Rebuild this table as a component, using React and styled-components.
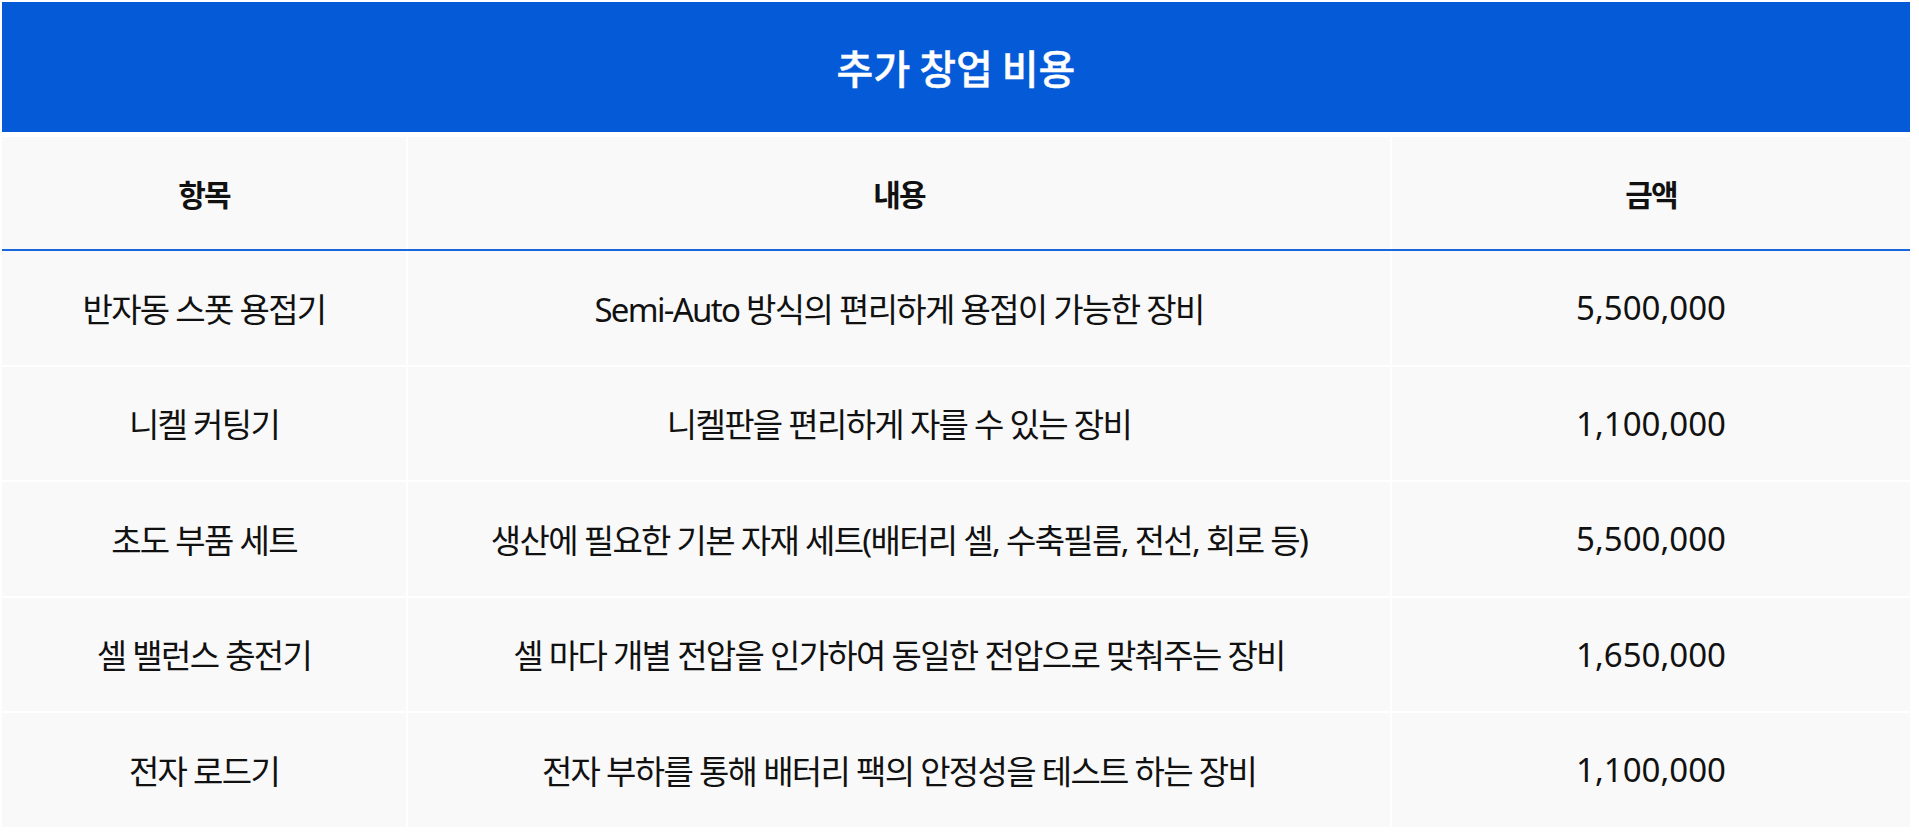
import styled, { createGlobalStyle } from "styled-components"

const GlobalStyle = createGlobalStyle`
  html, body {
    margin: 0;
    padding: 0;
    background: #ffffff;
  }
  body {
    font-family: "Noto Sans", "Noto Sans CJK KR", sans-serif;
    color: #111111;
  }
`;

const items = [
  { name: "반자동 스폿 용접기", desc: "Semi-Auto 방식의 편리하게 용접이 가능한 장비", price: "5,500,000" },
  { name: "니켈 커팅기", desc: "니켈판을 편리하게 자를 수 있는 장비", price: "1,100,000" },
  { name: "초도 부품 세트", desc: "생산에 필요한 기본 자재 세트(배터리 셀, 수축필름, 전선, 회로 등)", price: "5,500,000" },
  { name: "셀 밸런스 충전기", desc: "셀 마다 개별 전압을 인가하여 동일한 전압으로 맞춰주는 장비", price: "1,650,000" },
  { name: "전자 로드기", desc: "전자 부하를 통해 배터리 팩의 안정성을 테스트 하는 장비", price: "1,100,000" },
]

export default function App() {
  return (
    <>
      <GlobalStyle />
      <Wrapper>
        <Title>추가 창업 비용</Title>
        <HeadRow>
          <HeadCell>항목</HeadCell>
          <HeadCell>내용</HeadCell>
          <HeadCell>금액</HeadCell>
        </HeadRow>
        <Body>
          {items.map((item) => (
            <Row key={item.name + item.price}>
              <Cell>{item.name}</Cell>
              <Cell>{item.desc}</Cell>
              <Cell $latin>{item.price}</Cell>
            </Row>
          ))}
        </Body>
      </Wrapper>
    </>
  )
}

const Wrapper = styled.div`
  width: 1908px;
  padding: 2px 0 0 2px;
`;

const Title = styled.div`
  height: 130px;
  background: #055bd7;
  color: #ffffff;
  display: flex;
  align-items: center;
  justify-content: center;
  font-family: "Noto Sans CJK KR", sans-serif;
  font-size: 40px;
  font-weight: 500;
  -webkit-text-stroke: 0.4px #ffffff;
`;

const columns = `404px 982px 518px`;

const HeadRow = styled.div`
  margin-top: 5px;
  display: grid;
  grid-template-columns: ${columns};
  column-gap: 2px;
  border-bottom: 2px solid #1a67dc;
`;

const HeadCell = styled.div`
  height: 112px;
  background: #f9f9f9;
  display: flex;
  align-items: center;
  justify-content: center;
  font-family: "Noto Sans CJK KR", sans-serif;
  font-size: 30px;
  font-weight: 700;
  letter-spacing: -0.06em;
`;

const Body = styled.div`
  display: flex;
  flex-direction: column;
  gap: 2px;
`;

const Row = styled.div`
  display: grid;
  grid-template-columns: ${columns};
  column-gap: 2px;
`;

const Cell = styled.div`
  height: 113.5px;
  background: #f9f9f9;
  display: flex;
  align-items: center;
  justify-content: center;
  font-size: 33px;
  font-weight: 400;
  letter-spacing: ${(p) => (p.$latin ? "0" : "-1.7px")};
  white-space: nowrap;
`;
